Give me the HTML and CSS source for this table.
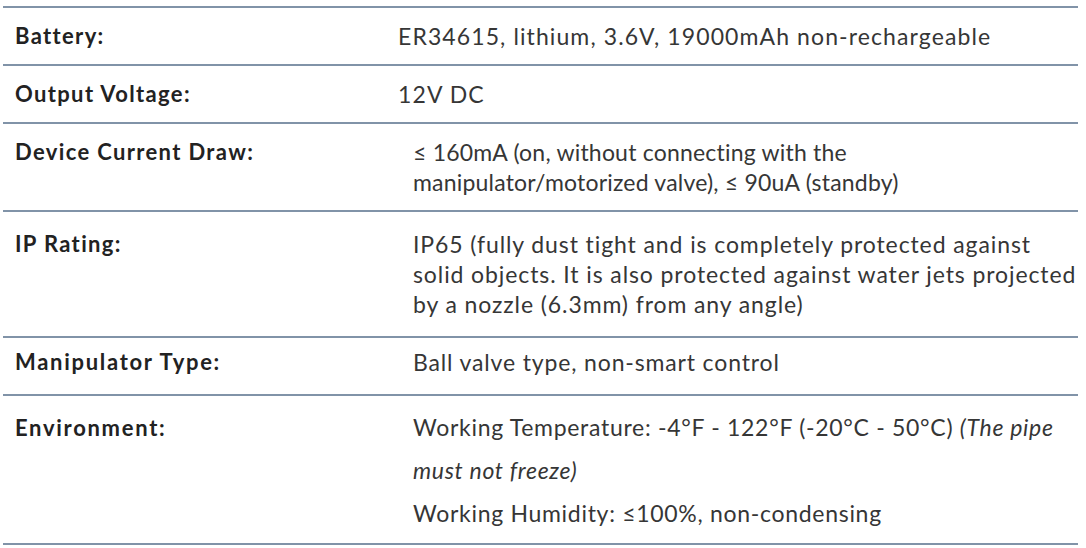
FILE: index.html
```html
<!DOCTYPE html>
<html lang="en">
<head>
<meta charset="utf-8">
<title>Specifications</title>
<link rel="stylesheet" href="styles.css">
</head>
<body>
<div class="specs">
  <div class="row r1">
    <div class="label">Battery:</div>
    <div class="value">ER34615, lithium, 3.6V, 19000mAh non-rechargeable</div>
  </div>
  <div class="row r2">
    <div class="label">Output Voltage:</div>
    <div class="value">12V DC</div>
  </div>
  <div class="row r3">
    <div class="label">Device Current Draw:</div>
    <div class="value indent">≤ 160mA (on, without connecting with the<br>manipulator/motorized valve), ≤ 90uA (standby)</div>
  </div>
  <div class="row r4">
    <div class="label">IP Rating:</div>
    <div class="value indent">IP65 (fully dust tight and is completely protected against<br>solid objects. It is also protected against water jets projected<br>by a nozzle (6.3mm) from any angle)</div>
  </div>
  <div class="row r5">
    <div class="label">Manipulator Type:</div>
    <div class="value indent">Ball valve type, non-smart control</div>
  </div>
  <div class="row r6">
    <div class="label">Environment:</div>
    <div class="value indent env">
      <p>Working Temperature: -4°F - 122°F (-20°C - 50°C) <em>(The pipe<br>must not freeze)</em></p>
      <p>Working Humidity: ≤100%, non-condensing</p>
    </div>
  </div>
</div>
</body>
</html>
```

FILE: styles.css
```css
html, body {
  margin: 0;
  padding: 0;
  background: #ffffff;
}

body {
  font-family: Lato, "Open Sans", "Liberation Sans", sans-serif;
  color: #2a2a2a;
}

.specs {
  width: 1075px;
  margin: 6px 0 0 3px;
  border-bottom: 2px solid #8193a8;
}

.row {
  display: grid;
  grid-template-columns: 383px 1fr;
  padding: 13px 0 13px 12px;
  border-top: 2px solid #8193a8;
}

.label {
  font-weight: 700;
  font-size: 22px;
  line-height: 30px;
  color: #222222;
  letter-spacing: 1.35px;
}

.value {
  font-size: 23px;
  line-height: 30px;
  color: #363636;
  white-space: nowrap;
  letter-spacing: 1.1px;
}

.value.indent {
  padding-left: 15px;
}

.r3 .value {
  letter-spacing: 0.2px;
}

.r4 {
  padding-top: 17px;
  padding-bottom: 17px;
}

.r4 .value {
  letter-spacing: 0.9px;
}

.r5 {
  padding-top: 9px;
  padding-bottom: 17px;
}

.r5 .label,
.r6 .label {
  letter-spacing: 1.7px;
}

.r5 .value {
  letter-spacing: 0.85px;
}

.r6 {
  padding-top: 10px;
  padding-bottom: 8px;
}

.r6 .label {
  line-height: 43px;
}

.env {
  letter-spacing: 0.7px;
}

.env p {
  margin: 0;
  line-height: 43px;
}

.env em {
  font-style: italic;
}
```
